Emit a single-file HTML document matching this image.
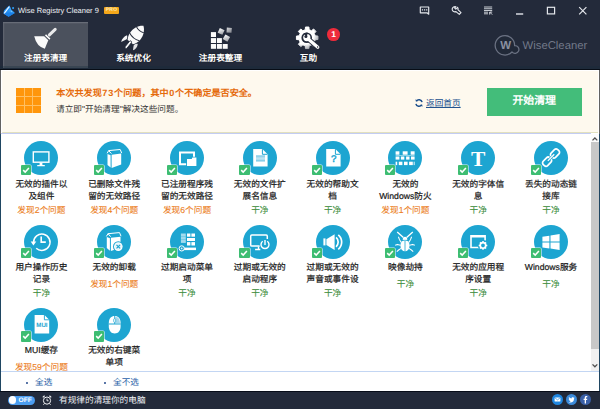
<!DOCTYPE html>
<html lang="zh-CN">
<head>
<meta charset="utf-8">
<title>Wise Registry Cleaner 9</title>
<style>
*{box-sizing:border-box;margin:0;padding:0}
html,body{width:600px;height:409px;overflow:hidden;background:#232a3a}
body{font-family:"Liberation Sans",sans-serif;font-size:9px;color:#222;position:relative;text-rendering:geometricPrecision;text-spacing-trim:space-all;font-kerning:none}
#app{position:absolute;left:0;top:0;width:600px;height:409px;overflow:hidden;background:#232a3a}
.abs{position:absolute}
/* header */
#hdr{position:absolute;left:0;top:0;width:600px;height:70px;background:#232a3a}
#title{position:absolute;left:18px;top:5px;font-size:7.5px;line-height:12px;color:#f2f4f7;white-space:nowrap;letter-spacing:0}
#pro{position:absolute;left:104px;top:7.2px;width:15px;height:7.2px;background:#f4a71a;border-radius:1px;color:#fde9b8;font-size:5px;line-height:7.4px;text-align:center;font-weight:bold;letter-spacing:.2px}
.tab{position:absolute;top:21.5px;height:46px;width:85px;text-align:center;color:#fff}
.tab.on{background:#4b515d;box-shadow:inset 0 1.2px 0 #676c77,inset 1.2px 0 0 #5e636e}
.tab .lb{text-shadow:0 0 1.2px rgba(0,0,0,.75);position:absolute;left:0;right:0;top:30.5px;font-size:8.67px;line-height:12px;font-weight:bold;color:#fff;white-space:nowrap}
.tab svg{position:absolute;left:50%;top:5px;margin-left:-13px}
#badge{position:absolute;left:327.4px;top:28.1px;width:12.6px;height:12.6px;border-radius:50%;background:#ee2b3b;color:#fff;font-size:8.5px;font-weight:bold;line-height:12.8px;text-align:center}
#wcw{position:absolute;left:499.1px;top:39.6px;font-size:11.5px;line-height:12px;font-weight:bold;color:#8a90a0;width:13px;text-align:center}
#wct{position:absolute;left:522.6px;top:38.5px;font-size:11.3px;line-height:15px;color:#727989;white-space:nowrap}
/* banner */
#ban{position:absolute;left:1px;top:70px;width:598px;height:63px;background:#fef9ee;box-shadow:inset 1.2px 1.1px 0 #fff,inset -1px 0 0 #fff,inset 0 -.7px 0 #d9d8ae}
#edgeB{position:absolute;left:0;top:70px;width:600px;height:63.6px;background:#626262}
#edgeL{position:absolute;left:0;top:133.6px;width:600px;height:258px;background:#1f4662}
#hline{position:absolute;left:0;top:65.8px;width:600px;height:4.2px;background:rgba(22,44,60,.32);border-bottom:1.1px solid #080d16;z-index:3}
#l1{position:absolute;left:55.3px;top:16.7px;font-size:9.1px;line-height:12px;font-weight:bold;color:#e56a0a;white-space:nowrap}
#l2{position:absolute;left:55px;top:33.4px;font-size:8.67px;line-height:12px;color:#333;white-space:nowrap}
#back{position:absolute;left:425px;top:27px;font-size:8.67px;line-height:12px;color:#22528e;text-decoration:underline;white-space:nowrap}
#go{position:absolute;left:485.7px;top:18.3px;width:95px;height:27.4px;background:#43bd7a;color:#fff;font-weight:bold;font-size:10.9px;line-height:27.6px;text-align:center}
#l1 i{font-style:normal;letter-spacing:.85px;margin-left:.5px}
#grid{position:absolute;left:15px;top:18.4px;width:25px;height:25px;background:#ffc063}
#grid b{position:absolute;width:7.7px;height:7.7px;background:#ff960c}
/* list */
#list{position:absolute;left:1px;top:133px;width:598px;height:239px;background:#fff}
#ltop{position:absolute;left:1px;top:133.4px;width:589.6px;height:1px;background:#c3cdf3}
#sb{position:absolute;left:590.8px;top:134px;width:7.8px;height:237px;background:linear-gradient(#fcfcfc 0,#fcfcfc 8px,#f1f1f1 8px)}
#thumb{position:absolute;left:0;top:8.2px;width:7.8px;height:206.4px;background:#c8c8c8}
.it{position:absolute;width:72px;text-align:center}
.it .c{position:absolute;left:19px;top:0;overflow:hidden;width:34px;height:34px;border-radius:50%;background:#1da5d1}
.it .k{position:absolute;left:15.5px;top:23.3px;width:10.4px;height:10.3px;background:#3dbd72;border-radius:1px;box-shadow:0 0 0 .6px rgba(255,255,255,.85)}
.it .k svg{position:absolute;left:.2px;top:.1px}
.it .t{position:absolute;left:-6px;width:84px;top:36.3px;font-size:8.67px;line-height:12.1px;color:#1a1a1a;-webkit-text-stroke:.22px}
.it .s{display:block;color:#3f8f3f;margin-top:1.8px;-webkit-text-stroke:.1px}
.it .s.o{margin-top:4.7px}
.it .s.w{color:#ec7d1c}
/* bottom */
#bot{position:absolute;left:1px;top:370.6px;width:598px;height:21px;background:#fff;border-top:1px solid #c3d6f3}
#bot i{position:absolute;top:10.6px;width:1.8px;height:1.8px;border-radius:50%;background:#2a4f8f}
#bot span{position:absolute;top:4.4px;font-size:8.67px;line-height:12px;color:#2a5fa8;white-space:nowrap}
#ftr{position:absolute;left:0;top:391.3px;width:600px;height:17.7px;background:#232a3a;box-shadow:inset 0 .9px 0 #070c18}
#tog{position:absolute;left:7.6px;top:4.3px;width:27px;height:9px;border-radius:4.5px;background:#4b9df0;color:#fff;font-size:6.6px;font-weight:bold;line-height:9.4px;text-align:right;padding-right:2.6px;letter-spacing:.1px}
#tog i{position:absolute;left:1px;top:.9px;width:7.2px;height:7.2px;border-radius:50%;background:#fff}
#ft{position:absolute;left:59px;top:2.8px;font-size:8.67px;line-height:12px;color:#f0f2f5;white-space:nowrap}
.soc{position:absolute;top:3px;width:11px;height:11px;border-radius:50%}
.soc svg{position:absolute;left:0;top:0}
</style>
</head>
<body>
<div id="app">
<div id="hdr">
  <div id="hline"></div>
  <svg class="abs" style="left:0;top:0" width="18" height="20" viewBox="0 0 18 20"><path d="M9.6 5.5 L11 9.6 L14.8 13.1 L8.6 16.8 L3.4 13.5 L4 10.4 L7.2 7.2Z" fill="#2490f2"/><path d="M8.6 16.8 L3.4 13.5 L8 12.4 L14.8 13.1Z" fill="#1b7fe6"/><path d="M9.6 5.5 L11 9.6 L14.8 13.1 L9.4 11.6Z" fill="#3aa2f8"/><line x1="4.2" y1="13.3" x2="9.3" y2="6.7" stroke="#f0f6ff" stroke-width="1.15"/><circle cx="13.1" cy="8.1" r="1.05" fill="#2f9af5"/><circle cx="11.4" cy="11.6" r=".6" fill="#8ccbfb"/></svg>
  <div id="title">Wise Registry Cleaner 9</div>
  <div id="pro">PRO</div>
  <div class="tab on" style="left:3.3px;width:84.7px"><div class="lb">注册表清理</div></div>
  <div class="tab" style="left:91px"><div class="lb">系统优化</div></div>
  <div class="tab" style="left:178px"><div class="lb">注册表整理</div></div>
  <div class="tab" style="left:266px"><div class="lb">互助</div></div>
  <div id="badge">1</div>
  <svg class="abs" style="left:0;top:0" width="600" height="70" viewBox="0 0 600 70">
<defs>
<linearGradient id="gq" x1="0" y1="0" x2="1" y2="1"><stop offset="0" stop-color="#fff"/><stop offset="1" stop-color="#9a9da3"/></linearGradient>
<linearGradient id="gq2" x1="0" y1="0" x2="1" y2="1"><stop offset="0" stop-color="#d8d9dc"/><stop offset="1" stop-color="#7d8088"/></linearGradient>
<radialGradient id="gg" cx="304" cy="34" r="17" gradientUnits="userSpaceOnUse"><stop offset="0.6" stop-color="#fff"/><stop offset="1" stop-color="#8c9099"/></radialGradient>
</defs>
<!-- broom -->
<path d="M34.2 36.3 L44.2 36.3 L48.3 40.2 L44.8 48.8 Q36.6 46.6 34.2 36.3Z" fill="#fafafa"/>
<line x1="45.5" y1="34.9" x2="49.9" y2="39.1" stroke="#fff" stroke-width="1.5"/>
<line x1="49.4" y1="34.9" x2="55.2" y2="29.3" stroke="#e9e9ea" stroke-width="3" stroke-linecap="round"/>
<!-- rocket -->
<g transform="translate(136.4 34.6) rotate(38.8)">
<path d="M0 -11.2 C4.2 -8.4 6.4 -3 6.2 1.6 C6 5 5 7.6 3.4 9.8 L-3.4 9.8 C-5 7.6 -6 5 -6.2 1.6 C-6.4 -3 -4.2 -8.4 0 -11.2Z" fill="#fafafa"/>
<path d="M-4.6 -6 Q0 -4 4.6 -6" stroke="#232a3a" stroke-width="1" fill="none"/>
<path d="M-6.2 3 Q0 5.8 6.2 3" stroke="#232a3a" stroke-width="1" fill="none"/>
<path d="M-6.9 6.4 C-8.6 9 -8.6 12.6 -7.2 15.4 C-6.2 13.2 -5.2 11.6 -4.6 9.8 C-4.9 8.4 -5.8 7 -6.9 6.4Z" fill="#f4f4f5"/>
<path d="M6.9 6.4 C8.6 9 8.4 12 7.2 14.4 C6.2 12.6 5.2 11.4 4.6 9.8 C4.9 8.4 5.8 7 6.9 6.4Z" fill="#e4e5e7"/>
<path d="M-2.4 9.8 L-2.4 12 M2.4 9.8 L2.4 12" stroke="#232a3a" stroke-width="1"/>
<rect x="-1.2" y="8.4" width="2.4" height="9" rx="1.2" fill="#fafafa" stroke="#232a3a" stroke-width=".8"/>
</g>
<!-- defrag -->
<g fill="#fbfbfb">
<rect x="210.9" y="32.1" width="5.1" height="4.9"/>
<rect x="210.9" y="38.1" width="5.1" height="4.9"/><rect x="216.9" y="38.1" width="5" height="4.9"/>
<rect x="210.9" y="44" width="5.1" height="4.8"/><rect x="216.9" y="44" width="5" height="4.8"/><rect x="222.7" y="44" width="5" height="4.8"/>
</g>
<rect x="-2.6" y="-2.6" width="5.2" height="5.2" fill="url(#gq)" transform="translate(221.1 31.4) rotate(25)"/>
<rect x="-2.5" y="-2.5" width="5" height="5" fill="url(#gq2)" transform="translate(229.2 30.2) rotate(4)"/>
<rect x="-2.7" y="-2.7" width="5.4" height="5.4" fill="url(#gq)" transform="translate(226.4 38.1) rotate(30)"/>
<!-- gear -->
<path d="M305.26 29.73 L305.49 27.03 L308.91 27.03 L309.14 29.73 L311.54 30.72 L313.61 28.98 L316.02 31.39 L314.28 33.46 L315.27 35.86 L317.97 36.09 L317.97 39.51 L315.27 39.74 L314.28 42.14 L316.02 44.21 L313.61 46.62 L311.54 44.88 L309.14 45.87 L308.91 48.57 L305.49 48.57 L305.26 45.87 L302.86 44.88 L300.79 46.62 L298.38 44.21 L300.12 42.14 L299.13 39.74 L296.43 39.51 L296.43 36.09 L299.13 35.86 L300.12 33.46 L298.38 31.39 L300.79 28.98 L302.86 30.72Z" fill="url(#gg)" stroke="url(#gg)" stroke-width="1" stroke-linejoin="round"/>
<circle cx="306.7" cy="37.8" r="5.3" fill="#232a3a"/>
<line x1="307" y1="38" x2="317.8" y2="47.2" stroke="#232a3a" stroke-width="5" stroke-linecap="round"/>
<circle cx="306.8" cy="37.6" r="3.6" fill="#fff"/>
<line x1="307" y1="38" x2="317.8" y2="47.2" stroke="#fff" stroke-width="3.2" stroke-linecap="round"/>
<path d="M306.9 37.3 L303.4 33.2 L307.6 32.4 Z" fill="#232a3a"/>
<circle cx="305.9" cy="36.4" r="1.5" fill="#232a3a"/>
<circle cx="317.6" cy="47" r=".7" fill="#232a3a"/>
</svg>
  <svg class="abs" style="left:410px;top:0" width="190" height="22" viewBox="410 0 190 22" fill="none" stroke="#e4e7ec" stroke-width="1">
<path d="M420.3 7 H428.7 V14.2 L427 12.8 H420.3Z" stroke-width="1.15" stroke-linejoin="round"/>
<path d="M421.9 9.9 H427.3" stroke-width="1.2" stroke-dasharray="1.2 .9"/>
<path d="M455.9 6.7 C454.2 6.2 452.5 7.2 452.2 8.9 C452 10.5 453.1 11.8 454.7 11.9 L456 11.6 L459.3 14.4 L461 12.7 L457.9 9.7 C458.3 8.8 458.1 7.9 457.6 7.3 L455.8 9.1 L454.7 8 L455.9 6.7Z" stroke-width="1.15" stroke-linejoin="round"/>
<path d="M484 7 H492.2 M484 8.75 H492.2 M484 10.5 H492.2 M484 12.2 H488 M484 13.8 H488" stroke-width=".85"/>
<path d="M489.8 12.2 L492.2 14.6 M492.2 12.1 L489.7 12.1 L489.7 14.6" stroke-width=".9"/>
<path d="M516 14 H523.2" stroke-width="1.4"/>
<rect x="547.4" y="7.3" width="7.2" height="6.6" stroke-width="1.2"/>
<path d="M579.2 7.2 L586.4 14.4 M586.4 7.2 L579.2 14.4" stroke-width="1.2"/>
</svg>
  <svg class="abs" style="left:490px;top:30px" width="36" height="34" viewBox="490 30 36 34" fill="none"><path d="M514.59 45.62 A9.7 9.7 0 1 0 511.96 51.95 A3.9 3.9 0 1 0 514.59 45.62Z" fill="#20273580" stroke="#6b7283" stroke-width="1.25" stroke-linejoin="round"/></svg>
<div id="wcw">W</div><div id="wct">WiseCleaner</div>
</div>
<div id="edgeB"></div><div id="edgeL"></div>
<div id="ban">
  <div id="grid"><b style="left:0.00px;top:0.00px"></b><b style="left:8.65px;top:0.00px"></b><b style="left:17.30px;top:0.00px"></b><b style="left:0.00px;top:8.65px"></b><b style="left:8.65px;top:8.65px"></b><b style="left:17.30px;top:8.65px"></b><b style="left:0.00px;top:17.30px"></b><b style="left:8.65px;top:17.30px"></b><b style="left:17.30px;top:17.30px"></b></div>
  <div id="l1">本次共发现<i>73</i>个问题，其中<i>0</i>个不确定是否安全。</div>
  <div id="l2">请立即"开始清理"解决这些问题。</div>
  <svg class="abs" style="left:413px;top:28px" width="10" height="10" viewBox="0 0 10 10" fill="none" stroke="#1d4f8c" stroke-width="1.5"><path d="M8.1 4.2 A3.2 3.2 0 0 0 2.3 3.1"/><path d="M1.9 5.8 A3.2 3.2 0 0 0 7.7 6.9"/><path d="M1.5 1.2 L1.9 3.6 L4.2 3.1Z" fill="#1d4f8c" stroke="none"/><path d="M8.5 8.8 L8.1 6.4 L5.8 6.9Z" fill="#1d4f8c" stroke="none"/></svg>
  <div id="back">返回首页</div>
  <div id="go">开始清理</div>
</div>
<div id="list" style="overflow:hidden">
<div class="it" style="left:4.4px;top:8.4px"><div class="c"><svg width="34" height="34" viewBox="0 0 34 34"><rect x="9.3" y="10.9" width="15.6" height="10.3" fill="none" stroke="#fff" stroke-width="1.4"/><path d="M15.6 21.8 H18.4 V24 H15.6Z" fill="#fff"/><path d="M13.2 24.6 H20.8" stroke="#fff" stroke-width="1.3"/></svg></div><div class="k"><svg width="10" height="10" viewBox="0 0 10 10"><path d="M2.2 5.1 L4.2 7.1 L7.9 3" fill="none" stroke="#fff" stroke-width="1.5"/></svg></div><div class="t">无效的插件以<br>及组件<span class="s w">发现2个问题</span></div></div>
<div class="it" style="left:77.2px;top:8.4px"><div class="c"><svg width="34" height="34" viewBox="0 0 34 34"><path d="M14.6 13.7 L24.2 12.6 V23.6 L14.6 26.9Z" fill="#fff"/><path d="M10.5 12.9 L13.6 14.2 V26.6 L10.5 24Z" fill="#fff"/><path d="M10.1 12.3 L11.7 9.6 L23.2 8.5 L24.7 12.1 M11.7 9.6 L14.4 12.6" fill="none" stroke="#fff" stroke-width="1"/></svg></div><div class="k"><svg width="10" height="10" viewBox="0 0 10 10"><path d="M2.2 5.1 L4.2 7.1 L7.9 3" fill="none" stroke="#fff" stroke-width="1.5"/></svg></div><div class="t">已删除文件残<br>留的无效路径<span class="s w">发现4个问题</span></div></div>
<div class="it" style="left:150.0px;top:8.4px"><div class="c"><svg width="34" height="34" viewBox="0 0 34 34"><path d="M24 16.2 V11.6 H10 V23.3 H16.6" fill="none" stroke="#fff" stroke-width="2"/><path d="M16.2 17.1 H21.2 L21.9 15.8 H27.2 V25.7 H16.2Z" fill="#1da5d1"/><path d="M17 17.9 H21.7 L22.4 16.6 H26.4 V24.9 H17Z" fill="#fff"/></svg></div><div class="k"><svg width="10" height="10" viewBox="0 0 10 10"><path d="M2.2 5.1 L4.2 7.1 L7.9 3" fill="none" stroke="#fff" stroke-width="1.5"/></svg></div><div class="t">已注册程序残<br>留的无效路径<span class="s w">发现6个问题</span></div></div>
<div class="it" style="left:222.8px;top:8.4px"><div class="c"><svg width="34" height="34" viewBox="0 0 34 34"><path d="M10.2 8.1 H19.4 L24.6 13.3 V25.4 H10.2Z" fill="#fff"/><path d="M19.4 8.1 V13.3 H24.6" fill="none" stroke="#1da5d1" stroke-width="1"/><rect x="13" y="14.6" width="9" height="5.7" fill="#cdeaf5"/><path d="M13 15 H22 M13 19.9 H22" stroke="#3fb0da" stroke-width=".8"/><path d="M13 16.7 H22 M13 18.3 H22" stroke="#8fd0e9" stroke-width=".6"/></svg></div><div class="k"><svg width="10" height="10" viewBox="0 0 10 10"><path d="M2.2 5.1 L4.2 7.1 L7.9 3" fill="none" stroke="#fff" stroke-width="1.5"/></svg></div><div class="t">无效的文件扩<br>展名信息<span class="s">干净</span></div></div>
<div class="it" style="left:295.6px;top:8.4px"><div class="c"><svg width="34" height="34" viewBox="0 0 34 34"><path d="M10.2 8.1 H19.4 L24.6 13.3 V25.4 H10.2Z" fill="#fff"/><path d="M19.4 8.1 V13.3 H24.6" fill="none" stroke="#1da5d1" stroke-width="1"/><text x="17.7" y="21.4" font-family="Liberation Sans" font-size="9.8" fill="#1da5d1" stroke="#1da5d1" stroke-width=".45" text-anchor="middle">?</text></svg></div><div class="k"><svg width="10" height="10" viewBox="0 0 10 10"><path d="M2.2 5.1 L4.2 7.1 L7.9 3" fill="none" stroke="#fff" stroke-width="1.5"/></svg></div><div class="t">无效的帮助文<br>档<span class="s">干净</span></div></div>
<div class="it" style="left:368.4px;top:8.4px"><div class="c"><svg width="34" height="34" viewBox="0 0 34 34"><g fill="#fff"><rect x="7.6" y="10.3" width="3.8" height="3.4"/><rect x="14.7" y="10.3" width="4.9" height="3.4"/><rect x="22.7" y="10.3" width="3.9" height="3.4"/><rect x="7.6" y="14.1" width="19" height=".9" opacity=".55"/><rect x="7.6" y="15.5" width="3.8" height="3.1"/><rect x="12.9" y="15.5" width="3.4" height="3.1"/><rect x="18.1" y="15.5" width="3.4" height="3.1"/><rect x="23" y="15.5" width="3.6" height="3.1"/><rect x="7.6" y="20.7" width="1.6" height="3.4"/><rect x="10.8" y="20.7" width="3.6" height="3.4"/><rect x="16" y="20.7" width="3.6" height="3.4"/><rect x="21.1" y="20.7" width="3.7" height="3.4"/><rect x="25.7" y="20.7" width=".9" height="3.4"/></g></svg></div><div class="k"><svg width="10" height="10" viewBox="0 0 10 10"><path d="M2.2 5.1 L4.2 7.1 L7.9 3" fill="none" stroke="#fff" stroke-width="1.5"/></svg></div><div class="t">无效的<br>Windows防火<span class="s w">发现1个问题</span></div></div>
<div class="it" style="left:441.2px;top:8.4px"><div class="c"><svg width="34" height="34" viewBox="0 0 34 34"><text x="17.2" y="25.2" font-family="Liberation Serif" font-size="21.5" font-weight="bold" fill="#fff" text-anchor="middle">T</text></svg></div><div class="k"><svg width="10" height="10" viewBox="0 0 10 10"><path d="M2.2 5.1 L4.2 7.1 L7.9 3" fill="none" stroke="#fff" stroke-width="1.5"/></svg></div><div class="t">无效的字体信<br>息<span class="s">干净</span></div></div>
<div class="it" style="left:514.0px;top:8.4px"><div class="c"><svg width="34" height="34" viewBox="0 0 34 34"><g fill="none" stroke="#fff" stroke-width="1.7" transform="translate(17.05 16.6) rotate(-46)"><rect x="-10.4" y="-3.1" width="9.4" height="6.2" rx="2.3"/><rect x="1" y="-3.1" width="9.4" height="6.2" rx="2.3"/><path d="M-1 -1.3 V1.3 M1 -1.3 V1.3" stroke="#1da5d1" stroke-width="2.2"/><path d="M-4.6 0 H4.6" stroke-width="1.3"/></g></svg></div><div class="k"><svg width="10" height="10" viewBox="0 0 10 10"><path d="M2.2 5.1 L4.2 7.1 L7.9 3" fill="none" stroke="#fff" stroke-width="1.5"/></svg></div><div class="t">丢失的动态链<br>接库<span class="s">干净</span></div></div>
<div class="it" style="left:4.4px;top:91.7px"><div class="c"><svg width="34" height="34" viewBox="0 0 34 34"><path d="M9.6 17.4 A8.2 8.2 0 1 1 12.2 23.2" fill="none" stroke="#fff" stroke-width="1.5"/><path d="M6.7 16.4 L12.3 16.4 L9.4 20.4Z" fill="#fff"/><path d="M17.2 11.4 V17.1 H21.8" fill="none" stroke="#fff" stroke-width="1.6"/></svg></div><div class="k"><svg width="10" height="10" viewBox="0 0 10 10"><path d="M2.2 5.1 L4.2 7.1 L7.9 3" fill="none" stroke="#fff" stroke-width="1.5"/></svg></div><div class="t">用户操作历史<br>记录<span class="s">干净</span></div></div>
<div class="it" style="left:77.2px;top:91.7px"><div class="c"><svg width="34" height="34" viewBox="0 0 34 34"><g transform="translate(-.7 -.9)"><path d="M14.6 13.7 L24.2 12.6 V23.6 L14.6 26.9Z" fill="#fff"/><path d="M10.5 12.9 L13.6 14.2 V26.6 L10.5 24Z" fill="#fff"/><path d="M10.1 12.3 L11.7 9.6 L23.2 8.5 L24.7 12.1 M11.7 9.6 L14.4 12.6" fill="none" stroke="#fff" stroke-width="1"/></g><circle cx="21.3" cy="21.6" r="5.3" fill="#1da5d1"/><circle cx="21.3" cy="21.6" r="4.3" fill="#fff"/><circle cx="21.3" cy="21.6" r="3.3" fill="#e3f4fa"/><path d="M19.5 19.8 L23.1 23.4 M23.1 19.8 L19.5 23.4" stroke="#1da5d1" stroke-width="1.2"/></svg></div><div class="k"><svg width="10" height="10" viewBox="0 0 10 10"><path d="M2.2 5.1 L4.2 7.1 L7.9 3" fill="none" stroke="#fff" stroke-width="1.5"/></svg></div><div class="t">无效的卸载<span class="s w o">发现1个问题</span></div></div>
<div class="it" style="left:150.0px;top:91.7px"><div class="c"><svg width="34" height="34" viewBox="0 0 34 34"><rect x="10.9" y="8.5" width="4.9" height="9.4" fill="#fff" opacity=".6"/><path d="M10.9 11.6 H15.8 M10.9 14.6 H15.8" stroke="#1da5d1" stroke-width=".5" opacity=".6"/><g fill="#fff"><rect x="17" y="8.5" width="3.4" height="3.2"/><rect x="21.4" y="8.5" width="3.6" height="3.2"/><rect x="17" y="13" width="8" height="3"/><rect x="17" y="17.1" width="3.4" height="3.4"/><rect x="21.4" y="17.1" width="3.6" height="3.4"/><rect x="13.6" y="22.6" width="12.4" height="2.5"/></g><circle cx="11.7" cy="23.4" r="2.6" fill="#1da5d1" stroke="#fff" stroke-width="1"/><circle cx="11.7" cy="23.4" r=".9" fill="#fff" opacity=".85"/></svg></div><div class="k"><svg width="10" height="10" viewBox="0 0 10 10"><path d="M2.2 5.1 L4.2 7.1 L7.9 3" fill="none" stroke="#fff" stroke-width="1.5"/></svg></div><div class="t">过期启动菜单<br>项<span class="s">干净</span></div></div>
<div class="it" style="left:222.8px;top:91.7px"><div class="c"><svg width="34" height="34" viewBox="0 0 34 34"><path d="M24.3 14 V11.2 Q24.3 10.1 23.2 10.1 H8.8 Q7.7 10.1 7.7 11.2 V20 Q7.7 21.1 8.8 21.1 H17" fill="none" stroke="#fff" stroke-width="1.5"/><path d="M15.5 21.6 V24 M12.1 24.5 H17.3" stroke="#fff" stroke-width="1.4"/><circle cx="22" cy="19.6" r="5.6" fill="#1da5d1"/><path d="M19.7 16.3 A4 4 0 1 0 24.3 16.3" fill="none" stroke="#fff" stroke-width="1.4"/><path d="M22 14.9 V19.9" stroke="#fff" stroke-width="1.4"/></svg></div><div class="k"><svg width="10" height="10" viewBox="0 0 10 10"><path d="M2.2 5.1 L4.2 7.1 L7.9 3" fill="none" stroke="#fff" stroke-width="1.5"/></svg></div><div class="t">过期或无效的<br>启动程序<span class="s">干净</span></div></div>
<div class="it" style="left:295.6px;top:91.7px"><div class="c"><svg width="34" height="34" viewBox="0 0 34 34"><rect x="7.4" y="13.4" width="2.1" height="7" fill="#fff"/><path d="M10.4 14.2 L18.6 9.2 V24.9 L10.4 19.9Z" fill="#fff"/><path d="M20.1 12.4 A6.4 6.4 0 0 1 20.1 21.8" fill="none" stroke="#fff" stroke-width="1.7"/><path d="M22.3 9.8 A9.6 9.6 0 0 1 22.3 24.4" fill="none" stroke="#fff" stroke-width="1.7"/></svg></div><div class="k"><svg width="10" height="10" viewBox="0 0 10 10"><path d="M2.2 5.1 L4.2 7.1 L7.9 3" fill="none" stroke="#fff" stroke-width="1.5"/></svg></div><div class="t">过期或无效的<br>声音或事件设<span class="s">干净</span></div></div>
<div class="it" style="left:368.4px;top:91.7px"><div class="c"><svg width="34" height="34" viewBox="0 0 34 34"><ellipse cx="17" cy="20.6" rx="4.6" ry="5.7" fill="#fff"/><path d="M14.7 15 C14.7 12.6 15.6 11.7 17 11.7 C18.4 11.7 19.3 12.6 19.3 15Z" fill="#fff"/><path d="M17 16 V26.3" stroke="#1da5d1" stroke-width=".8"/><path d="M12.6 15.3 H21.4" stroke="#1da5d1" stroke-width=".7"/><path d="M15.4 12.6 L9.2 6.9 M18.6 12.6 L24.8 6.9" fill="none" stroke="#fff" stroke-width="1.3"/><path d="M13.2 17.4 L11.4 14.4 L10.4 11.8 M20.8 17.4 L22.6 14.4 L23.6 11.8 M12.5 20.2 L9.4 19.4 L7.2 20.2 M21.5 20.2 L24.6 19.4 L26.8 20.2 M13 23.4 L10.6 25 L8.8 26.6 M21 23.4 L23.4 25 L25.2 26.6" fill="none" stroke="#fff" stroke-width="1.05" stroke-linejoin="round"/></svg></div><div class="k"><svg width="10" height="10" viewBox="0 0 10 10"><path d="M2.2 5.1 L4.2 7.1 L7.9 3" fill="none" stroke="#fff" stroke-width="1.5"/></svg></div><div class="t">映像劫持<span class="s o">干净</span></div></div>
<div class="it" style="left:441.2px;top:91.7px"><div class="c"><svg width="34" height="34" viewBox="0 0 34 34"><path d="M19.4 22.5 H10 V10.8 H24.1 V15.6" fill="none" stroke="#fff" stroke-width="1.6"/><path d="M9.8 11.3 H24.2" stroke="#fff" stroke-width="2.2"/><circle cx="22" cy="20.4" r="5.2" fill="#1da5d1"/><g transform="translate(22 20.4)"><circle r="2.7" fill="none" stroke="#fff" stroke-width="1.7"/><g stroke="#fff" stroke-width="1.5"><path d="M0 -4.3 V-2.6 M0 4.3 V2.6 M-4.3 0 H-2.6 M4.3 0 H2.6 M-3.05 -3.05 L-1.85 -1.85 M3.05 3.05 L1.85 1.85 M-3.05 3.05 L-1.85 1.85 M3.05 -3.05 L1.85 -1.85"/></g></g></svg></div><div class="k"><svg width="10" height="10" viewBox="0 0 10 10"><path d="M2.2 5.1 L4.2 7.1 L7.9 3" fill="none" stroke="#fff" stroke-width="1.5"/></svg></div><div class="t">无效的应用程<br>序设置<span class="s">干净</span></div></div>
<div class="it" style="left:514.0px;top:91.7px"><div class="c"><svg width="34" height="34" viewBox="0 0 34 34"><g fill="#fff"><path d="M8.4 11.7 L15.4 10.7 V16.5 H8.4Z"/><path d="M16.5 10.5 L25.6 9.1 V16.5 H16.5Z"/><path d="M8.4 17.6 H15.4 V23.4 L8.4 22.4Z"/><path d="M16.5 17.6 H25.6 V25 L16.5 23.6Z"/></g></svg></div><div class="k"><svg width="10" height="10" viewBox="0 0 10 10"><path d="M2.2 5.1 L4.2 7.1 L7.9 3" fill="none" stroke="#fff" stroke-width="1.5"/></svg></div><div class="t">Windows服务<span class="s o">干净</span></div></div>
<div class="it" style="left:4.4px;top:175.0px"><div class="c"><svg width="34" height="34" viewBox="0 0 34 34"><path d="M10.6 7 H20.4 L25.2 11.8 V25.6 H10.6Z" fill="#fff"/><path d="M20.4 7 V11.8 H25.2" fill="none" stroke="#1da5d1" stroke-width=".9"/><text x="17.9" y="19" font-family="Liberation Sans" font-size="6.1" font-weight="bold" fill="#1da5d1" text-anchor="middle">MUI</text></svg></div><div class="k"><svg width="10" height="10" viewBox="0 0 10 10"><path d="M2.2 5.1 L4.2 7.1 L7.9 3" fill="none" stroke="#fff" stroke-width="1.5"/></svg></div><div class="t">MUI缓存<span class="s w o">发现59个问题</span></div></div>
<div class="it" style="left:77.2px;top:175.0px"><div class="c"><svg width="34" height="34" viewBox="0 0 34 34"><path d="M11.8 15 C11.8 10.4 14.2 8 17.7 8 C21.2 8 23.6 10.4 23.6 15 V18.6 C23.6 22.8 21.2 25.6 17.7 25.6 C14.2 25.6 11.8 22.8 11.8 18.6Z" fill="#fff"/><path d="M18.4 8.8 C21.2 9 22.8 11 22.9 15.2 H18.4Z" fill="#a5d8ec"/><path d="M11.8 16 H23.6" stroke="#1da5d1" stroke-width="1.2"/><path d="M17.7 8 V16" stroke="#1da5d1" stroke-width=".9"/><rect x="16.7" y="10.6" width="2" height="3.8" rx="1" fill="#fff" stroke="#1da5d1" stroke-width=".7"/></svg></div><div class="k"><svg width="10" height="10" viewBox="0 0 10 10"><path d="M2.2 5.1 L4.2 7.1 L7.9 3" fill="none" stroke="#fff" stroke-width="1.5"/></svg></div><div class="t">无效的右键菜<br>单项<span class="s">干净</span></div></div>
</div>
<div id="ltop"></div>
<div id="sb"><div id="thumb"></div><svg class="abs" style="left:0;top:0" width="8" height="237" viewBox="0 0 8 237" fill="none" stroke="#505050" stroke-width="1.3"><path d="M1.5 6.4 L3.9 4 L6.3 6.4"/><path d="M1.5 230.4 L3.9 232.8 L6.3 230.4"/></svg></div>
<div id="bot"><i style="left:25.4px"></i><span style="left:34px">全选</span><i style="left:103.4px"></i><span style="left:112px">全不选</span></div>
<div id="ftr">
  <div id="tog"><i></i>OFF</div>
  <svg class="abs" style="left:41px;top:3px" width="12" height="12" viewBox="0 0 12 12" fill="none" stroke="#f2f3f5" stroke-width="1"><circle cx="6" cy="6.6" r="3.6"/><path d="M6 4.6 V6.8 H7.6" stroke-width=".9"/><path d="M1.8 3.4 L3.6 1.8 M10.2 3.4 L8.4 1.8" stroke-width="1.2"/><path d="M3.4 9.6 L2.4 10.8 M8.6 9.6 L9.6 10.8" stroke-width=".9"/></svg>
  <div id="ft">有规律的清理你的电脑</div>
  <div class="soc" style="left:552px;background:#1f86e0"><svg width="11" height="11" viewBox="0 0 11 11"><rect x="2.6" y="3.4" width="5.8" height="4.2" fill="#fff" rx=".5"/><path d="M2.8 3.7 L5.5 5.9 L8.2 3.7" fill="none" stroke="#1f86e0" stroke-width=".7"/></svg></div>
  <div class="soc" style="left:566px;background:#3b8ada"><svg width="11" height="11" viewBox="0 0 11 11"><path d="M8.6 3.7 C8.3 3.9 8 4 7.7 4 C8 3.8 8.2 3.5 8.3 3.2 C8 3.4 7.7 3.5 7.3 3.6 C6.7 2.9 5.4 3.3 5.6 4.4 C4.5 4.4 3.6 3.8 3 3.1 C2.6 3.8 2.9 4.6 3.4 5 C3.2 5 2.9 4.9 2.7 4.8 C2.7 5.5 3.2 6.1 3.9 6.3 C3.7 6.4 3.4 6.4 3.2 6.3 C3.4 6.9 4 7.4 4.7 7.4 C4 7.9 3.2 8.1 2.4 8 C5.2 9.6 8.3 7.6 8 4.5 C8.3 4.3 8.5 4 8.6 3.7Z" fill="#fff"/></svg></div>
  <div class="soc" style="left:580.2px;background:#3a5fa6"><svg width="11" height="11" viewBox="0 0 11 11"><path d="M6 9.4 V6 H7.1 L7.3 4.7 H6 V3.9 C6 3.5 6.1 3.3 6.6 3.3 H7.3 V2.1 C7.2 2.1 6.8 2 6.3 2 C5.3 2 4.7 2.6 4.7 3.7 V4.7 H3.6 V6 H4.7 V9.4Z" fill="#fff"/></svg></div>
</div>
</div>
</body>
</html>
